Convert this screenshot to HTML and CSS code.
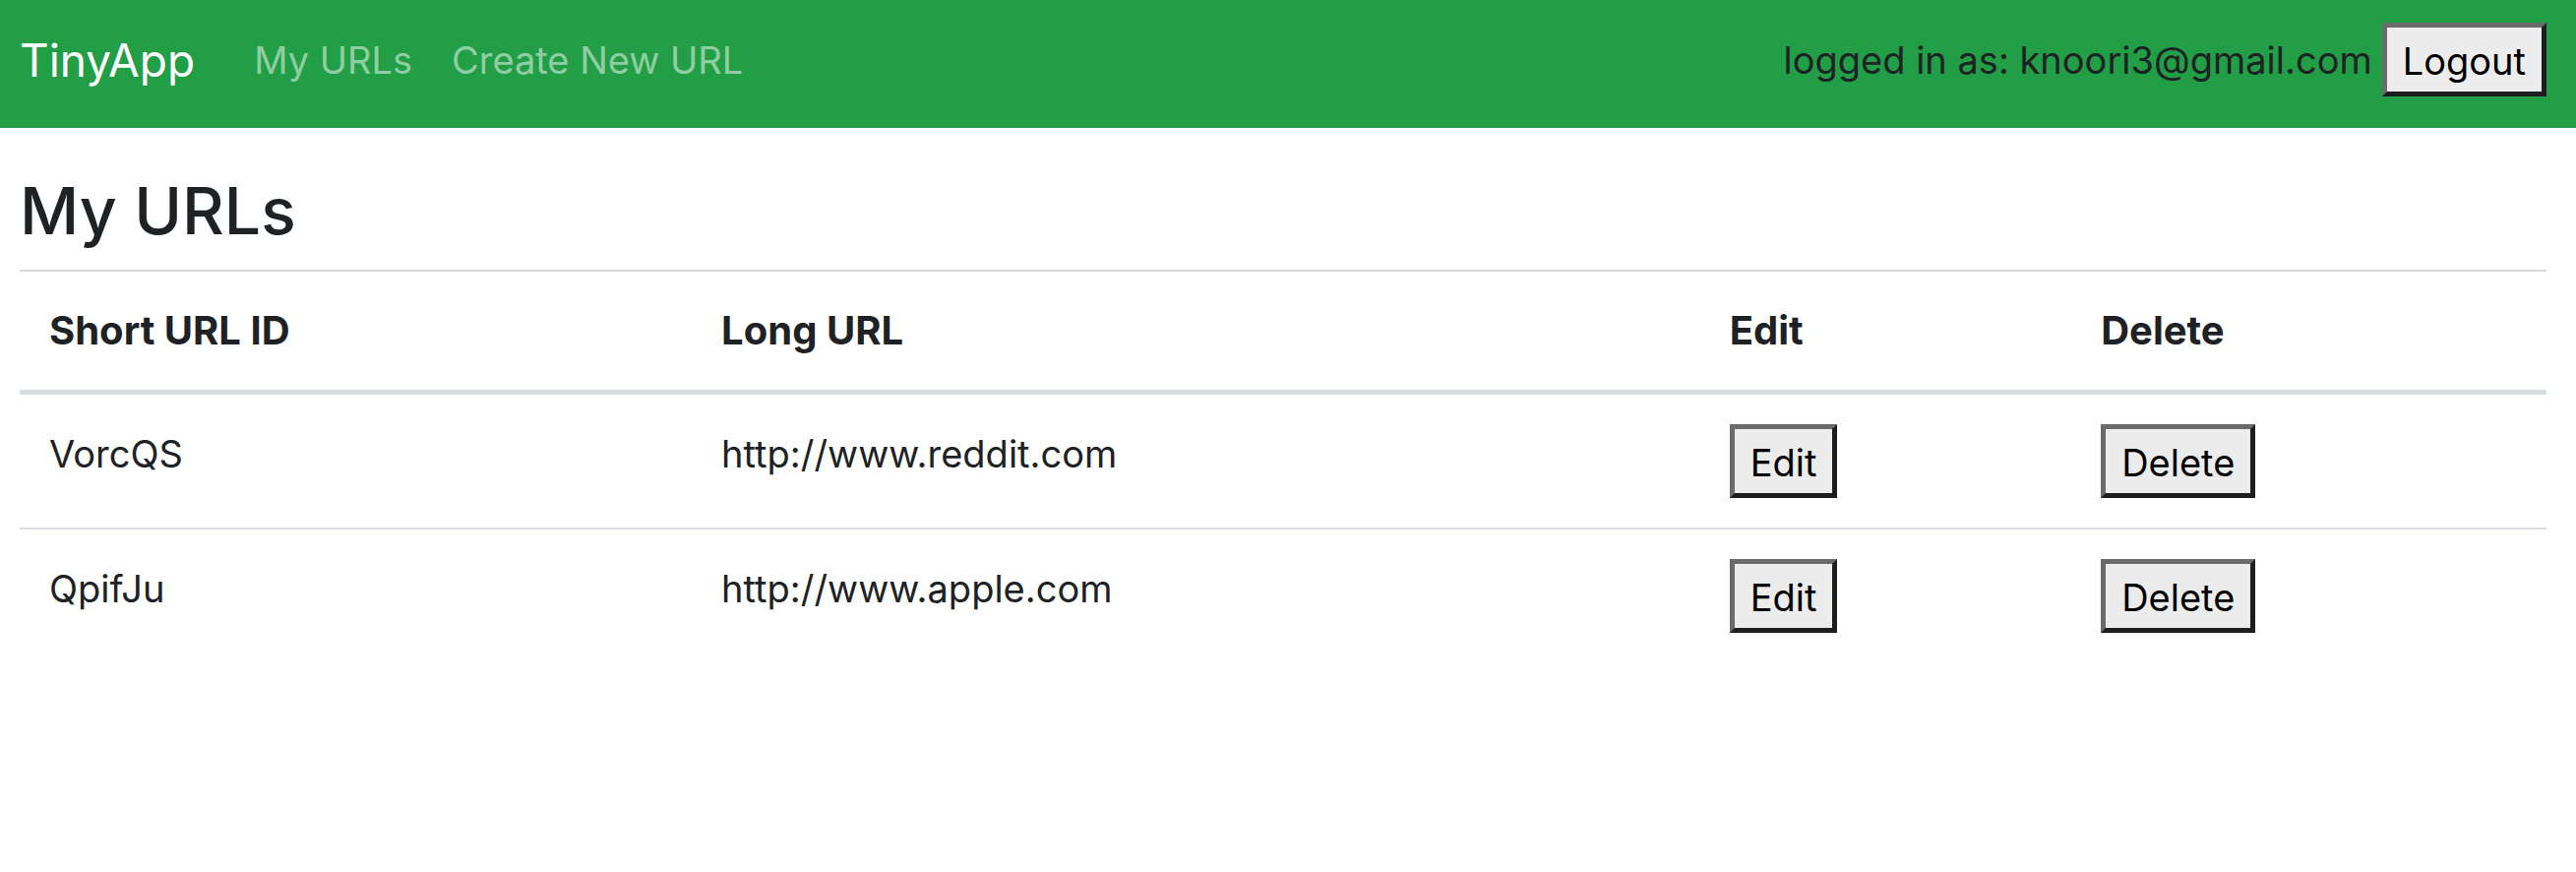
FILE: index.html
```html
<!DOCTYPE html>
<html lang="en">
<head>
  <meta charset="utf-8">
  <meta name="viewport" content="width=device-width, initial-scale=1">
  <title>TinyApp</title>
  <link rel="stylesheet" href="styles.css">
</head>
<body>
  <header>
    <nav class="navbar">
      <a class="navbar-brand" href="/urls">TinyApp</a>
      <div class="navbar-nav">
        <a class="nav-link" href="/urls">My URLs</a>
        <a class="nav-link" href="/urls/new">Create New URL</a>
      </div>
      <form class="session" method="post" action="/logout">
        <span>logged in as: knoori3@gmail.com</span>
        <button class="btn" type="submit">Logout</button>
      </form>
    </nav>
  </header>
  <main class="content">
    <h3 class="title">My URLs</h3>
    <table class="table">
      <colgroup>
        <col class="col-id">
        <col class="col-long">
        <col class="col-edit">
        <col class="col-delete">
      </colgroup>
      <thead>
        <tr>
          <th scope="col">Short URL ID</th>
          <th scope="col">Long URL</th>
          <th scope="col">Edit</th>
          <th scope="col">Delete</th>
        </tr>
      </thead>
      <tbody>
        <tr>
          <td>VorcQS</td>
          <td>http://www.reddit.com</td>
          <td><form method="get" action="/urls/VorcQS"><button class="btn" type="submit">Edit</button></form></td>
          <td><form method="post" action="/urls/VorcQS/delete"><button class="btn" type="submit">Delete</button></form></td>
        </tr>
        <tr>
          <td>QpifJu</td>
          <td>http://www.apple.com</td>
          <td><form method="get" action="/urls/QpifJu"><button class="btn" type="submit">Edit</button></form></td>
          <td><form method="post" action="/urls/QpifJu/delete"><button class="btn" type="submit">Delete</button></form></td>
        </tr>
      </tbody>
    </table>
  </main>
</body>
</html>
```

FILE: styles.css
```css
* {
  box-sizing: border-box;
}

body {
  margin: 0;
  background: #fff;
  color: #1e2225;
  font-family: Inter, "Liberation Sans", sans-serif;
  font-size: 38px;
  line-height: 60px;
}

.navbar {
  display: flex;
  align-items: center;
  padding: 23px 30px 32px 20px;
  background: #219e46;
}

.navbar-brand {
  margin-right: 60px;
  color: #fff;
  font-size: 46px;
  text-decoration: none;
}

.navbar-nav {
  display: flex;
  flex: 1;
  gap: 40px;
}

.nav-link {
  color: rgba(255, 255, 255, 0.5);
  text-decoration: none;
}

.session {
  display: flex;
  align-items: center;
  gap: 10px;
}

.btn {
  display: block;
  margin: 0;
  padding: 4px 16px 1px;
  border: 5px solid;
  border-color: #6b6b6b #1e1e1e #1e1e1e #6b6b6b;
  border-radius: 0;
  background: #ececec;
  color: #000;
  font: inherit;
}

.content {
  padding: 42px 30px 0 20px;
}

.title {
  margin: 0 0 18px;
  font-size: 66px;
  font-weight: 500;
  line-height: 84px;
}

.table {
  width: 100%;
  border-spacing: 0;
  table-layout: fixed;
}

.col-id {
  width: 26.6%;
}

.col-long {
  width: 39.9%;
}

.col-edit {
  width: 14.7%;
}

.col-delete {
  width: 18.8%;
}

.table th,
.table td {
  padding: 30px;
  border-top: 2px solid #d8dde1;
  text-align: left;
  vertical-align: top;
}

.table th {
  border-bottom: 5px solid #d8dde1;
  font-size: 40px;
  font-weight: 700;
}

.table tbody tr:first-child td {
  border-top: 0;
}
```
